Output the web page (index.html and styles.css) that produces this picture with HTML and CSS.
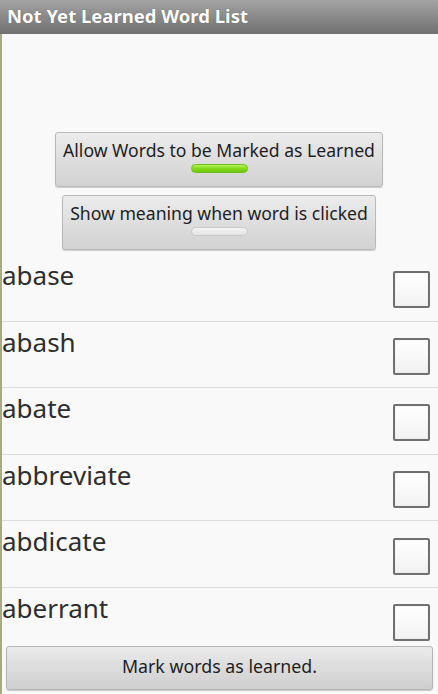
FILE: index.html
```html
<!DOCTYPE html>
<html>
<head>
<meta charset="utf-8">
<link rel="stylesheet" href="styles.css">
</head>
<body>
<div class="app">
  <div class="titlebar">Not Yet Learned Word List</div>
  <div class="main">
    <div class="content">
      <div class="toggles">
        <div class="toggle">
          <span class="toggle-label">Allow Words to be Marked as Learned</span>
          <span class="pill on"></span>
        </div>
        <div class="toggle">
          <span class="toggle-label">Show meaning when word is clicked</span>
          <span class="pill"></span>
        </div>
      </div>
      <ul class="list">
        <li class="row"><span class="word">abase</span><span class="check"></span></li>
        <li class="row"><span class="word">abash</span><span class="check"></span></li>
        <li class="row"><span class="word">abate</span><span class="check"></span></li>
        <li class="row"><span class="word">abbreviate</span><span class="check"></span></li>
        <li class="row"><span class="word">abdicate</span><span class="check"></span></li>
        <li class="row"><span class="word">aberrant</span><span class="check"></span></li>
      </ul>
    </div>
    <div class="bottombar">
      <div class="btn">Mark words as learned.</div>
    </div>
  </div>
</div>
</body>
</html>
```
FILE: styles.css
```css
html, body {
  margin: 0;
  padding: 0;
}
body {
  width: 438px;
  height: 694px;
  overflow: hidden;
  font-family: "Noto Sans", "Open Sans", "DejaVu Sans", sans-serif;
  background: #f8f8f8;
}
.app {
  display: flex;
  flex-direction: column;
  height: 694px;
}
.titlebar {
  height: 34px;
  flex: 0 0 34px;
  box-sizing: border-box;
  padding-left: 7px;
  background: linear-gradient(#a3a3a3, #8a8a8a 50%, #707070);
  color: #ffffff;
  font-weight: bold;
  font-size: 18.5px;
  line-height: 32px;
  white-space: nowrap;
  text-shadow: 0 0 1px rgba(0,0,0,0.35);
}
.main {
  flex: 1;
  display: flex;
  flex-direction: column;
  border-left: 2px solid #a9aa80;
  min-height: 0;
  background: #f9f9f9;
}
.content {
  flex: 1;
  overflow: hidden;
  min-height: 0;
}
.toggles {
  display: flex;
  flex-direction: column;
  align-items: center;
  gap: 8px;
  padding-top: 98px;
  margin-left: -2px;
}
.toggle {
  display: flex;
  flex-direction: column;
  align-items: center;
  box-sizing: border-box;
  padding: 6px 7px 13px;
  border: 1px solid #b9b9b9;
  border-radius: 3px;
  background: linear-gradient(#ececec, #dedede 50%, #d2d2d2);
  box-shadow: 0 1px 1px rgba(0,0,0,0.18);
}
.toggle-label {
  font-size: 17.6px;
  line-height: 22px;
  color: #1e1e1e;
  white-space: nowrap;
}
.pill {
  display: block;
  width: 57px;
  height: 9px;
  margin-top: 3px;
  box-sizing: border-box;
  border-radius: 5px;
  background: linear-gradient(#f4f4f4, #e2e2e2);
  border: 1px solid #c9c9c9;
}
.pill.on {
  background: linear-gradient(#b6f25e, #86dc1c 50%, #6cc60e);
  border: 1px solid #6fbf1a;
}
.list {
  list-style: none;
  margin: 5px 0 0;
  padding: 0;
}
.row {
  display: flex;
  justify-content: space-between;
  align-items: center;
  box-sizing: border-box;
  height: 66.6px;
  border-bottom: 1px solid #dddddd;
  padding-right: 8px;
}
.word {
  align-self: flex-start;
  font-size: 26px;
  line-height: 35px;
  padding-top: 3px;
  color: #2e2e2e;
}
.check {
  width: 37px;
  height: 37px;
  box-sizing: border-box;
  border: 2px solid #707070;
  border-radius: 2px;
  background: linear-gradient(#ffffff, #f2f2f2);
  box-shadow: inset 0 0 1px rgba(0,0,0,0.25);
  margin-top: 4px;
}
.bottombar {
  flex: 0 0 52px;
  box-sizing: border-box;
  padding: 4px 5px 4px 4px;
  background: #f9f9f9;
}
.btn {
  height: 44px;
  box-sizing: border-box;
  border: 1px solid #b5b5b5;
  border-radius: 3px;
  background: linear-gradient(#ebebeb, #dcdcdc 50%, #cfcfcf);
  box-shadow: 0 1px 1px rgba(0,0,0,0.2);
  text-align: center;
  font-size: 17.8px;
  line-height: 22px;
  padding-top: 8px;
  color: #1e1e1e;
}
```
